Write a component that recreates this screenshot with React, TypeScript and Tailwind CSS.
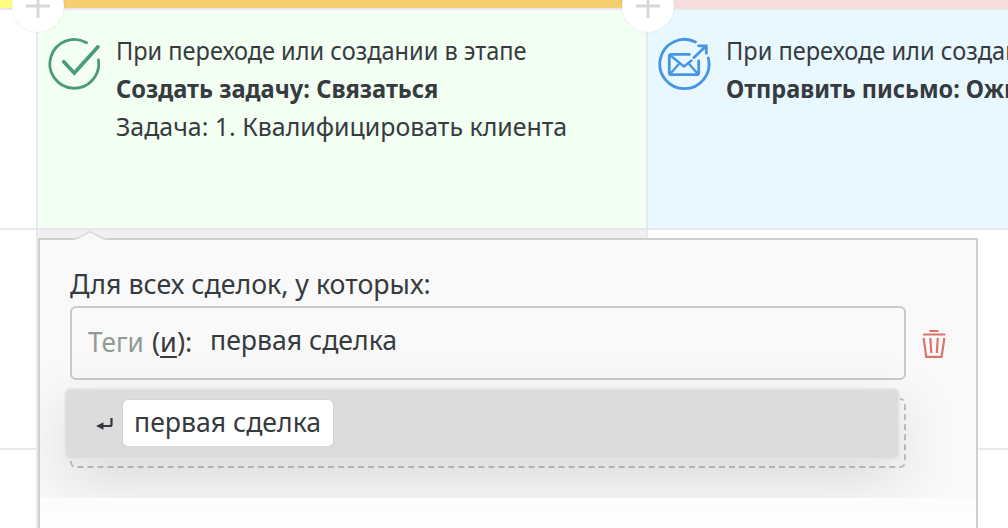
import { useState } from "react"

function CheckIcon() {
  return (
    <svg width="54" height="54" viewBox="0 0 54 54" fill="none" stroke="#4a9b78" strokeWidth="2.8" strokeLinecap="round" strokeLinejoin="round">
      <path d="M38.5 5.7A24.4 24.4 0 1 0 50.4 23" />
      <path d="M15.7 24.7L26.3 36L50 9.8" strokeWidth="3.6" strokeLinejoin="miter" />
    </svg>
  )
}

function MailIcon() {
  return (
    <svg width="54" height="54" viewBox="0 0 54 54" fill="none" stroke="#4496e4" strokeWidth="2.8" strokeLinecap="round" strokeLinejoin="round">
      <path d="M37.5 5A24.6 24.6 0 1 0 50.3 21" />
      <path d="M31.5 17.3H13.3Q11.3 17.3 11.3 19.3V35.7Q11.3 37.7 13.3 37.7H38.7Q40.7 37.7 40.7 35.7V24" />
      <path d="M12.5 18.5L26 29.5L33.5 23.5M12.5 36.5L20.5 27.5M39.5 36.5L31.5 27.5" strokeWidth="2.4" />
      <path d="M36 20.5L47.5 9.5M40.5 8.8H48.3V16.3" strokeLinejoin="miter" />
    </svg>
  )
}

function TrashIcon() {
  return (
    <svg width="24" height="30" viewBox="0 0 24 30" fill="none" stroke="#d9746c" strokeWidth="2.2">
      <path d="M7.5 2H16.5M1 5.5H23.3" />
      <path d="M1.7 9L4.2 27.8H19.6L22.4 9M8.3 9L9.3 24M15.8 9L14.8 24" />
    </svg>
  )
}

function EnterIcon() {
  return (
    <svg width="18" height="14" viewBox="0 0 18 14" fill="none">
      <path d="M15.5 1V7.5Q15.5 9 14 9H6" stroke="#34383d" strokeWidth="2.2" />
      <path d="M0 9L7.5 5.2V12.8Z" fill="#34383d" />
    </svg>
  )
}

function PlusButton() {
  return (
    <button className="flex size-[52px] items-center justify-center rounded-full bg-white shadow-[0_0_2px_rgba(0,0,0,0.12)]">
      <svg width="24" height="24" viewBox="0 0 24 24" stroke="#d8d8d8" strokeWidth="3">
        <path d="M0 12H24M12 0V24" />
      </svg>
    </button>
  )
}

export default function App() {
  const [tag] = useState("первая сделка")

  return (
    <div className="relative flex h-[528px] w-[1008px] flex-col overflow-hidden bg-white font-['Noto_Sans','Open_Sans',sans-serif] text-[#363b40]">
      <div className="flex h-2 shrink-0">
        <div className="w-[37px] bg-[#fffd7f]" />
        <div className="w-[610px] bg-[#f7ce6f]" />
        <div className="flex-1 bg-[#f9dcdc]" />
      </div>

      <div className="flex h-[222px] shrink-0 border-y-2 border-[#e6e8ea] text-[25px]">
        <div className="w-[38px] border-r-2 border-[#e6e8ea]" />
        <div className="flex w-[610px] gap-[14px] border-r-2 border-[#e6e8ea] bg-[#f3fff3] pl-[10px] pt-[27px]">
          <CheckIcon />
          <div className="-mt-1.5 whitespace-nowrap leading-[38px]">
            <p className="origin-left scale-x-[0.942]">При переходе или создании в этапе</p>
            <p className="origin-left scale-x-[0.947] font-bold">Создать задачу: Связаться</p>
            <p className="origin-left scale-x-[0.996]">Задача: 1. Квалифицировать клиента</p>
          </div>
        </div>
        <div className="flex flex-1 gap-[14px] overflow-hidden bg-[#e9f8fe] pl-[10px] pt-[27px]">
          <div className="shrink-0">
            <MailIcon />
          </div>
          <div className="-mt-1.5 whitespace-nowrap leading-[38px]">
            <p className="origin-left scale-x-[0.944]">При переходе или создании в этапе</p>
            <p className="origin-left scale-x-[0.938] font-bold">Отправить письмо: Ожидание</p>
          </div>
        </div>
      </div>

      <div className="flex h-[220px] shrink-0 border-b-2 border-[#e6e8ea]">
        <div className="w-[38px] border-r-2 border-[#e6e8ea]" />
        <div className="w-[610px] border-r-2 border-[#e6e8ea] bg-[#f0f0f0]" />
      </div>
      <div className="w-[38px] flex-1 border-r-2 border-[#e6e8ea]" />

      <div className="absolute left-3 -top-[20px]">
        <PlusButton />
      </div>
      <div className="absolute left-[622px] -top-[20px]">
        <PlusButton />
      </div>

      <div className="absolute left-[38px] top-[238px] h-[320px] w-[940px] border-2 border-[#cdcfd1] bg-white text-[27px]">
        <div className="relative h-[258px] overflow-hidden bg-[#f9f9f9] pl-[30px] pt-[22px]">
          <p className="origin-left scale-x-[0.991] leading-[44px]">Для всех сделок, у которых:</p>
          <div className="flex items-center gap-[16px]">
            <div className="flex h-[74px] w-[836px] items-center whitespace-nowrap rounded-[6px] border-2 border-[#c9cacb] pb-0.5 pl-4">
              <div className="w-[64px]">
                <span className="inline-block origin-left scale-x-[0.97] text-[#929997]">Теги</span>
              </div>
              <div className="w-[58px]">
                (<u className="decoration-2 underline-offset-4">и</u>):
              </div>
              <span className="origin-left scale-x-[0.986] pb-1">{tag}</span>
            </div>
            <button className="mt-0.5">
              <TrashIcon />
            </button>
          </div>
          <div className="mt-[18px] h-[70px] w-[836px] rounded-[6px] border-2 border-dashed border-[#c2c2c2]" />

          {/* tag suggestions */}
          <div className="absolute left-[24px] top-[148px] flex h-[72px] w-[836px] items-center rounded-[7px] border-2 border-[#e6e6e6] bg-[#dcdcdc] pl-[30px] shadow-[0_20px_60px_rgba(0,0,0,0.13)]">
            <EnterIcon />
            <div className="mb-0.5 ml-[9px] h-[46px] w-[210px] whitespace-nowrap rounded-[5px] bg-white pl-[11px] leading-[43px] shadow-[0_0_2px_rgba(0,0,0,0.12)]">
              <span className="inline-block origin-left scale-x-[0.986]">{tag}</span>
            </div>
          </div>
        </div>
        <div className="h-[60px] bg-linear-to-b from-[#fcfcfc] to-white" />

        <svg className="absolute -top-[10px] left-[31px]" width="40" height="12" viewBox="0 0 40 12">
          <path d="M2 10Q5 10 8 8L19 1.5L30 8Q33 10 36 10V12H2Z" fill="#f9f9f9" />
          <path d="M2 9Q5 9 8 7.5L19 1.5L30 7.5Q33 9 36 9" fill="none" stroke="#d9dbdc" strokeWidth="1.5" />
        </svg>
      </div>
    </div>
  )
}
